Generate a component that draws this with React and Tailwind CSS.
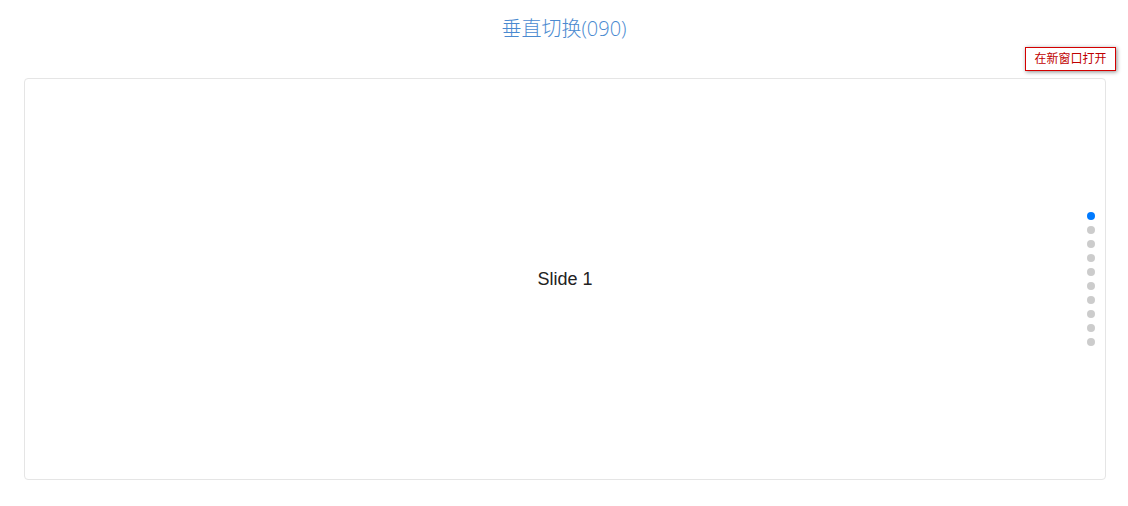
const dots = Array.from({ length: 10 }, (_, i) => i)

function Pagination({ active }) {
  return (
    <div className="absolute right-[10px] top-1/2 flex -translate-y-1/2 flex-col gap-[6px]">
      {dots.map((i) => (
        <span
          key={i}
          className={
            i === active
              ? 'block h-[8px] w-[8px] rounded-full bg-[#007aff]'
              : 'block h-[8px] w-[8px] rounded-full bg-[#cccccc]'
          }
        />
      ))}
    </div>
  )
}

export default function App() {
  return (
    <div className="min-h-[506px] bg-white pt-[16px] font-['Liberation_Sans','Noto_Sans_CJK_SC',sans-serif]">
      <h1 className="text-center font-['Open_Sans','Noto_Sans_CJK_SC',sans-serif] text-[20px] font-light leading-[26px] text-[#4a8ad0]">
        垂直切换(090)
      </h1>
      <div className="mt-[5px] flex justify-end pr-[12px]">
        <button className="h-[24px] w-[91px] whitespace-nowrap border border-[#d40000] bg-white px-0 text-[12px] leading-[22px] text-[#c00000] shadow-[1px_1px_4px_rgba(0,0,0,0.45)]">
          在新窗口打开
        </button>
      </div>
      <div className="relative mx-[24px] mt-[7px] mr-[22px] flex h-[402px] items-center justify-center rounded-[4px] border border-[#e5e5e5]">
        <span className="text-[18px] text-[#222]">Slide 1</span>
        <Pagination active={0} />
      </div>
    </div>
  )
}
